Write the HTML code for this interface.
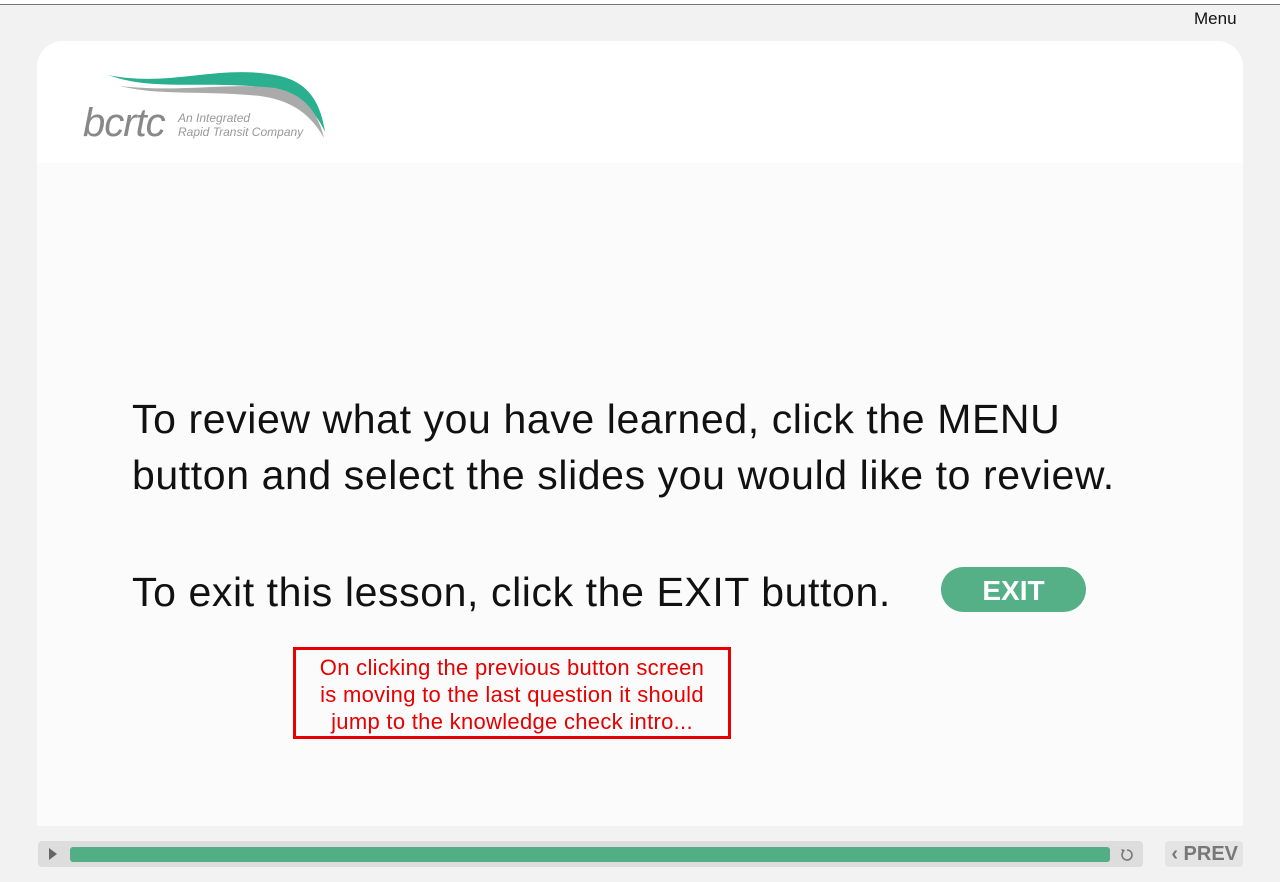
<!DOCTYPE html>
<html><head><style>
body{margin:0;width:1280px;height:882px;background:#f2f2f2;position:relative;overflow:hidden;font-family:"Liberation Sans",sans-serif}
.top{position:absolute;left:0;top:0;width:1280px;height:4px;background:#fff;border-bottom:1px solid #777}
.menu{position:absolute;left:1194px;top:9px;font-size:17px;color:#111}
.card{position:absolute;left:37px;top:41px;width:1206px;height:785px;background:#fff;border-radius:26px 26px 0 0}
.inner{position:absolute;left:37px;top:163px;width:1206px;height:663px;background:#fbfbfb}
.t{position:absolute;left:132px;font-size:41px;color:#111;white-space:nowrap;letter-spacing:0.6px}
.exit{position:absolute;left:941px;top:567px;width:145px;height:45px;border-radius:23px;background:#55b087;color:#fff;font-weight:bold;font-size:28px;text-align:center;line-height:47px}
.note{position:absolute;left:293px;top:647px;width:432px;border:3px solid #e60000;color:#e60000;font-size:22px;line-height:27px;text-align:center;padding-top:4px;box-sizing:content-box;height:82px;letter-spacing:0.3px}
.bar{position:absolute;left:38px;top:841px;width:1105px;height:26px;background:#ddd;border-radius:4px}
.fill{position:absolute;left:32px;top:6px;width:1040px;height:15px;background:#52ae84;border-radius:3px}
.prev{position:absolute;left:1165px;top:841px;width:78px;height:26px;background:#e4e4e4;border-radius:4px;color:#777;font-weight:bold;font-size:20px;line-height:27px;text-align:right;padding-right:5px;box-sizing:border-box}
</style></head><body>
<div class="top"></div>
<div class="menu">Menu</div>
<div class="card"></div>
<div class="inner"></div>
<svg style="position:absolute;left:80px;top:68px" width="250" height="75">
<path d="M28 7 C90 20 140 -5 200 8 C225 14 240 30 245 64 C232 35 210 22 170 18 C110 14 70 22 28 7Z" fill="#2bb08f"/>
<path d="M40 18 C100 25 150 14 195 20 C225 26 238 45 244 70 C230 45 210 32 180 28 C120 22 80 28 40 18Z" fill="#aaa"/>
<text x="3" y="68" font-size="40" fill="#888" font-family="Liberation Sans" font-style="italic" style="font-weight:100" letter-spacing="-1">bcrtc</text>
<text x="98" y="54" font-size="12" fill="#999" font-style="italic">An Integrated</text>
<text x="98" y="68" font-size="12" fill="#999" font-style="italic">Rapid Transit Company</text>
</svg>
<div class="t" style="top:396px">To review what you have learned, click the MENU</div>
<div class="t" style="top:452px">button and select the slides you would like to review.</div>
<div class="t" style="top:569px">To exit this lesson, click the EXIT button.</div>
<div class="exit">EXIT</div>
<div class="note">On clicking the previous button screen<br>is moving to the last question it should<br>jump to the knowledge check intro...</div>
<div class="bar"><svg style="position:absolute;left:10px;top:7px" width="10" height="12"><path d="M1 0 L9 6 L1 12Z" fill="#666"/></svg><div class="fill"></div>
<svg style="position:absolute;left:1081px;top:6px" width="16" height="16"><path d="M4 5 A5 5 0 1 0 8 3" fill="none" stroke="#777" stroke-width="1.6"/><path d="M2 2 L6 3 L4 6Z" fill="#777"/></svg></div>
<div class="prev">‹ PREV</div>
</body></html>
